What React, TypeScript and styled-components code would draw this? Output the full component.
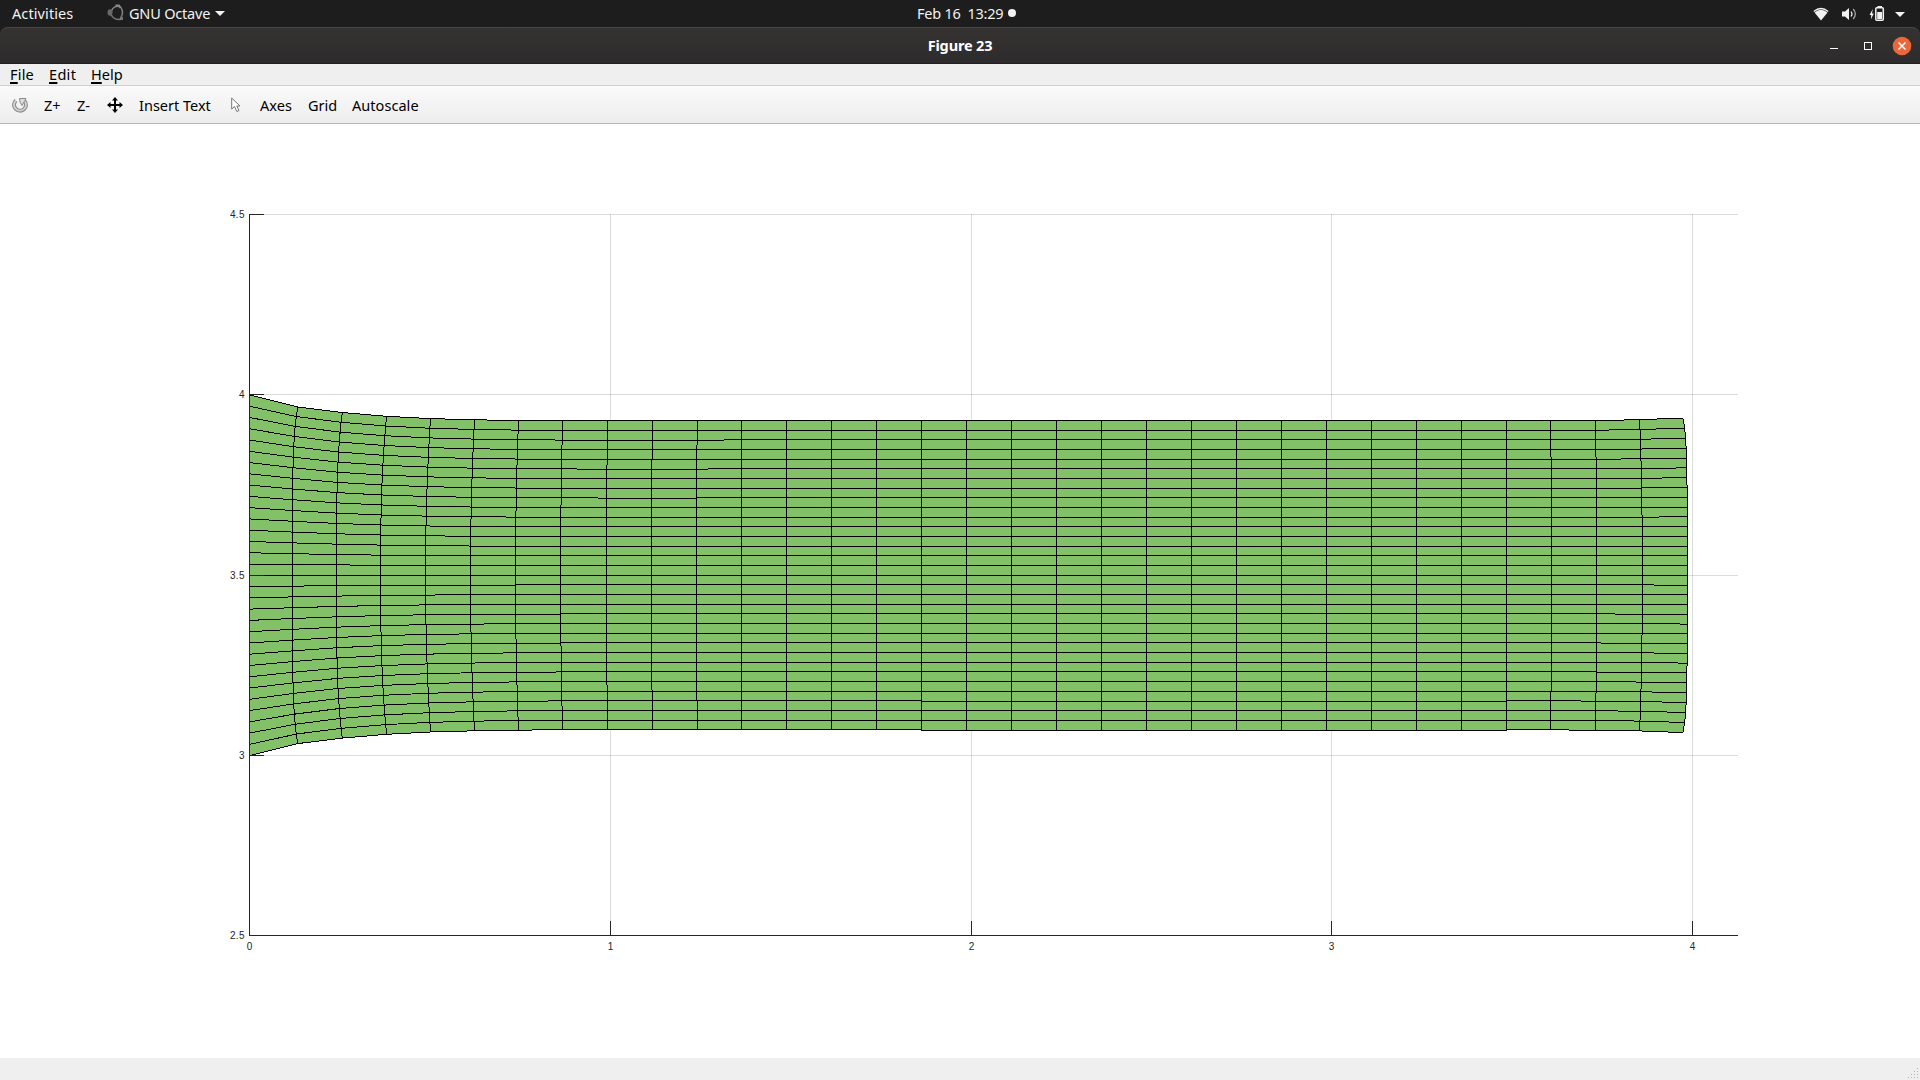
import React from "react";
import styled, { createGlobalStyle } from "styled-components";

const Global = createGlobalStyle`
  html, body { margin: 0; padding: 0; overflow: hidden; }
  * { box-sizing: border-box; }
`;

const Screen = styled.div`
  width: 1920px;
  height: 1080px;
  display: flex;
  flex-direction: column;
  background: #1d1d1d;
  font-family: "Noto Sans", sans-serif;
  font-size: 14.5px;
  white-space: pre;
`;

const TopBar = styled.header`
  height: 27px;
  flex: none;
  display: grid;
  grid-template-columns: 917px 1fr auto;
  align-items: center;
  padding-right: 14px;
  color: #f2f2f2;
`;

const BarGroup = styled.div`
  display: flex;
  align-items: center;
  height: 27px;
`;

const Label = styled.span<{ $w: number; $ls?: number; $gap?: number; $lift?: number }>`
  width: ${(p) => p.$w}px;
  margin-left: ${(p) => p.$gap ?? 0}px;
  letter-spacing: ${(p) => p.$ls ?? 0}px;
  padding-bottom: ${(p) => p.$lift ?? 0}px;
  flex: none;
  line-height: 20px;
`;

const Icon = styled.svg<{ $gap?: number; $lift?: number }>`
  display: block;
  flex: none;
  margin-left: ${(p) => p.$gap ?? 0}px;
  margin-bottom: ${(p) => p.$lift ?? 0}px;
`;

const TitleBar = styled.div`
  height: 37px;
  flex: none;
  display: grid;
  grid-template-columns: 1fr auto 1fr;
  align-items: center;
  border-top: 1px solid #484744;
  border-bottom: 1px solid #201e1f;
  border-radius: 8px 8px 0 0;
  background: linear-gradient(#343331, #2d2b2c);
  color: #fff;
`;

const Title = styled.h1`
  grid-column: 2;
  margin: 0;
  padding-bottom: 2px;
  font-size: 14.5px;
  font-weight: 700;
  line-height: 20px;
  letter-spacing: -0.15px;
`;

const Controls = styled.div`
  justify-self: end;
  padding-right: 8px;
`;

const MenuBar = styled.nav`
  height: 21px;
  flex: none;
  display: flex;
  align-items: center;
  padding-left: 10px;
  background: #efefef;
  color: #000;
`;

const Mnemonic = styled.span`
  text-decoration: underline;
  text-decoration-thickness: 2px;
  text-underline-offset: 2px;
  text-decoration-skip-ink: none;
`;

const ToolBar = styled.div`
  height: 39px;
  flex: none;
  display: flex;
  align-items: center;
  border-top: 1px solid #d0d0d0;
  border-bottom: 1px solid #b6b6b6;
  background: linear-gradient(#fafafa, #ededed);
  color: #000;
`;

const Canvas = styled.main`
  height: 934px;
  flex: none;
  background: #fff;
`;

const StatusBar = styled.footer`
  height: 22px;
  flex: none;
  display: flex;
  align-items: flex-end;
  justify-content: flex-end;
  padding: 0 1px 1px 0;
  background: #efefef;
`;

const TickText = styled.text`
  font-family: "Liberation Sans", Arial, sans-serif;
  font-size: 10px;
  letter-spacing: 0.3px;
  fill: #262626;
`;

/* ---- deformed mesh ---- */
const N = 32;
const CY = 575.3;

// x at mid-height, x shift at the edge, shift exponent, edge height, linear term, exponent of the rest
type Col = { x: number; dx: number; p: number; h: number; a: number; q: number };
const columns: Col[] = [
  { x: 249.5, dx: 0, p: 1, h: 180.4, a: 180.4, q: 3 },
  { x: 292.5, dx: 5.2, p: 5, h: 168.3, a: 172.9, q: 5 },
  { x: 336.5, dx: 5.8, p: 3.5, h: 162.8, a: 166.3, q: 3 },
  { x: 380.6, dx: 6, p: 2.6, h: 159, a: 161.2, q: 3 },
  { x: 425.5, dx: 5, p: 2, h: 156.7, a: 158, q: 3 },
  { x: 470.5, dx: 4, p: 2, h: 155.5, a: 156.2, q: 3 },
  { x: 515.5, dx: 3, p: 2, h: 154.8, a: 155.3, q: 3 },
  { x: 560.6, dx: 2, p: 2, h: 154.5, a: 154.8, q: 3 },
  { x: 606.3, dx: 1.2, p: 1.5, h: 154.4, a: 154.62, q: 3 },
  { x: 651.5, dx: 0.8, p: 1.5, h: 154.4, a: 154.6, q: 3 },
  { x: 696.6, dx: 0.5, p: 1, h: 154.55, a: 154.62, q: 3 },
];
for (let i = 11; i <= 28; i++) {
  columns.push({ x: 741.5 + (i - 11) * 45, dx: 0, p: 2, h: i < 15 ? 154.66 : 154.71, a: 154.69, q: 3 });
}
columns.push({ x: 1551.3, dx: -0.5, p: 2, h: 154.68, a: 154.7, q: 3 });
columns.push({ x: 1596.6, dx: -1, p: 2, h: 154.75, a: 154.7, q: 3 });
columns.push({ x: 1642.3, dx: -2.7, p: 2.4, h: 155.6, a: 155, q: 3 });
columns.push({ x: 1687.7, dx: -4.8, p: 5, h: 157.3, a: 156, q: 5 });

const node = (i: number, k: number): [number, number] => {
  const u = 1 - k / (N / 2);
  const m = Math.abs(u);
  const c = columns[i];
  const shift = i === N ? -2 * m ** 2 - 2.8 * m ** 12 : c.dx * m ** c.p;
  const off = c.a * m + (c.h - c.a) * m ** c.q;
  return [c.x + shift, CY - Math.sign(u) * off];
};

const range = Array.from({ length: N + 1 }, (_, i) => i);
const toPath = (pts: [number, number][]) =>
  "M" + pts.map(([x, y]) => x.toFixed(2) + " " + y.toFixed(2)).join("L");
const rowPaths = range.map((k) => toPath(range.map((i) => node(i, k))));
const colPaths = range.map((i) => toPath(range.map((k) => node(i, k))));
const outline = toPath([
  ...range.map((i) => node(i, 0)),
  ...range.map((k) => node(N, k)),
  ...range.map((i) => node(N - i, N)),
]);

const xTicks = [249.5, 610.5, 971.5, 1331.5, 1692.5];
const yTicks: [string, number][] = [
  ["4.5", 214.5],
  ["4", 394.5],
  ["3.5", 575.5],
  ["3", 755.5],
  ["2.5", 935.5],
];

const Plot = () => (
  <Icon width="1920" height="934" viewBox="0 124 1920 934">
    <g stroke="#262626" strokeOpacity="0.16" shapeRendering="crispEdges">
      {yTicks.slice(0, 4).map(([t, y]) => (
        <path key={t} d={`M249 ${y}H1738`} />
      ))}
      {xTicks.slice(1).map((x) => (
        <path key={x} d={`M${x} 214V935`} />
      ))}
    </g>
    <path d={outline + "Z"} fill="#82c167" shapeRendering="crispEdges" />
    <g stroke="#000" fill="none" shapeRendering="crispEdges">
      {rowPaths.map((d, i) => (
        <path key={"r" + i} d={d} />
      ))}
      {colPaths.map((d, i) => (
        <path key={"c" + i} d={d} />
      ))}
    </g>
    <g stroke="#262626" fill="none" shapeRendering="crispEdges">
      <path d="M249.5 214V935.5H1738" />
      {yTicks.map(([t, y]) => (
        <path key={t} d={`M249 ${y}H264`} />
      ))}
      {xTicks.map((x) => (
        <path key={x} d={`M${x} 921V935`} />
      ))}
    </g>
    {yTicks.map(([t, y]) => (
      <TickText key={t} x="244.8" y={y + 3.5} textAnchor="end">
        {t}
      </TickText>
    ))}
    {xTicks.map((x, i) => (
      <TickText key={x} x={x + 0.3} y="950" textAnchor="middle">
        {i}
      </TickText>
    ))}
  </Icon>
);

const OctaveLogo = () => (
  <Icon width="18" height="18" viewBox="0 0 18 18" $gap={26} $lift={1}>
    <path d="M4.500 7A6.200 6.200 0 0 1 13.200 2.800Q16 5.500 15.300 10.500" fill="none" stroke="#858585" strokeWidth="1.500" />
    <path d="M4 10.500Q6.500 15.800 13 15.500L15.500 10" fill="none" stroke="#757575" strokeWidth="1.600" />
    <ellipse cx="3" cy="8.500" rx="2.500" ry="3.300" fill="#686868" />
    <path d="M8.500 1.500H12L13.500 4" fill="none" stroke="#8a8a8a" strokeWidth="1.800" />
    <path d="M12.500 15.500L15.800 12.500V16Z" fill="#858585" />
  </Icon>
);

const TrayIcons = () => (
  <Icon width="94" height="20" viewBox="1812 3 94 20">
    <path d="M1814.500 11.500Q1821 6 1827.500 11.500L1821 19.500Z" fill="#f2f2f2" />
    <path d="M1813.800 10.500Q1821 4.500 1828.200 10.500" fill="none" stroke="#f2f2f2" strokeWidth="1.300" />
    <path d="M1842 10.500H1845L1849 7V19L1845 15.500H1842Z" fill="#f2f2f2" />
    <path d="M1851 10.500Q1853 13 1851 15.500" fill="none" stroke="#f2f2f2" strokeWidth="1.200" />
    <path d="M1853.200 8Q1857.500 13 1853.200 18" fill="none" stroke="#aaa" strokeWidth="1.200" />
    <path d="M1872.800 8L1869.500 14H1871.300L1870.800 18.500L1873.800 12.500H1872Z" fill="#f2f2f2" />
    <rect x="1875.800" y="6.800" width="7.500" height="12.500" rx="1" fill="none" stroke="#f2f2f2" strokeWidth="1.500" />
    <path d="M1877.500 5H1882V6.500H1877.500ZM1877.200 11H1882V18H1877.200Z" fill="#f2f2f2" />
    <path d="M1895 11H1905L1900 16Z" fill="#f2f2f2" />
  </Icon>
);

export default function App() {
  return (
    <>
      <Global />
      <Screen>
        <TopBar>
          <BarGroup>
            <Label $w={69} $gap={12} $ls={0.1} $lift={2}>Activities</Label>
            <OctaveLogo />
            <Label $w={86} $gap={4} $ls={-0.2} $lift={2}>GNU Octave</Label>
            <Icon width="10" height="5"><path d="M0 0H10L5 5Z" fill="#f2f2f2" /></Icon>
          </BarGroup>
          <BarGroup>
            <Label $w={91} $ls={-0.25} $lift={2}>Feb 16  13:29</Label>
            <Icon width="8" height="8" $lift={1}><circle cx="4" cy="4" r="4" fill="#f2f2f2" /></Icon>
          </BarGroup>
          <BarGroup>
            <TrayIcons />
          </BarGroup>
        </TopBar>
        <TitleBar>
          <Title>Figure 23</Title>
          <Controls>
            <Icon width="84" height="20" viewBox="1828 35 84 20">
              <path d="M1830 47.500H1838" stroke="#fff" />
              <rect x="1864.500" y="41.500" width="7" height="7" fill="none" stroke="#fff" />
              <circle cx="1902" cy="45" r="9.300" fill="#e9673a" />
              <path d="M1898.500 41.500L1905.500 48.500M1905.500 41.500L1898.500 48.500" stroke="#fff" strokeWidth="1.500" />
            </Icon>
          </Controls>
        </TitleBar>
        <MenuBar>
          <Label $w={38} $ls={0.2} $lift={2}><Mnemonic>F</Mnemonic>ile</Label>
          <Label $w={42} $gap={1} $ls={0.3} $lift={2}><Mnemonic>E</Mnemonic>dit</Label>
          <Label $w={40} $lift={2}><Mnemonic>H</Mnemonic>elp</Label>
        </MenuBar>
        <ToolBar>
          <Icon width="18" height="18" viewBox="10 95 18 18" $gap={11} $lift={-1}>
            <path d="M15 99.500A6 5.800 0 1 0 23.500 100" fill="none" stroke="#8c8c8c" strokeWidth="4" />
            <path d="M15 99.500A6 5.800 0 1 0 23.500 100" fill="none" stroke="#d2d2d2" strokeWidth="1.800" />
            <path d="M18.500 97.500H25L23 101L21 104.500L19 101Z" fill="#ddd" stroke="#8c8c8c" />
          </Icon>
          <Label $w={18} $gap={15}>Z+</Label>
          <Label $w={14} $gap={15}>Z-</Label>
          <Icon width="16" height="16" viewBox="0 0 16 16" $gap={16} $lift={-1}>
            <path d="M8 2V14M2 8H14" stroke="#000" strokeWidth="2" />
            <path d="M8 0L11 3.500H5ZM8 16L5 12.500H11ZM0 8L3.500 5V11ZM16 8L12.500 11V5Z" />
          </Icon>
          <Label $w={74} $gap={16}>Insert Text</Label>
          <Icon width="10" height="16" viewBox="0 0 10 16" $gap={18} $lift={-1}>
            <path d="M.7 1V12L3.500 9.500L5.800 14.500L8 13.500L5.800 9H9Z" fill="#fff" stroke="#777" />
          </Icon>
          <Label $w={33} $gap={19} $ls={0.1}>Axes</Label>
          <Label $w={29} $gap={15}>Grid</Label>
          <Label $w={68} $gap={15} $ls={0.05}>Autoscale</Label>
        </ToolBar>
        <Canvas>
          <Plot />
        </Canvas>
        <StatusBar>
          <Icon width="11" height="11" viewBox="0 0 11 11" shapeRendering="crispEdges">
            <path d="M9 0h1v1h-1zM6 3h1v1h-1zM9 3h1v1h-1zM3 6h1v1h-1zM6 6h1v1h-1zM9 6h1v1h-1zM0 9h1v1h-1zM3 9h1v1h-1zM6 9h1v1h-1zM9 9h1v1h-1z" fill="#b4b4b4" />
          </Icon>
        </StatusBar>
      </Screen>
    </>
  );
}
